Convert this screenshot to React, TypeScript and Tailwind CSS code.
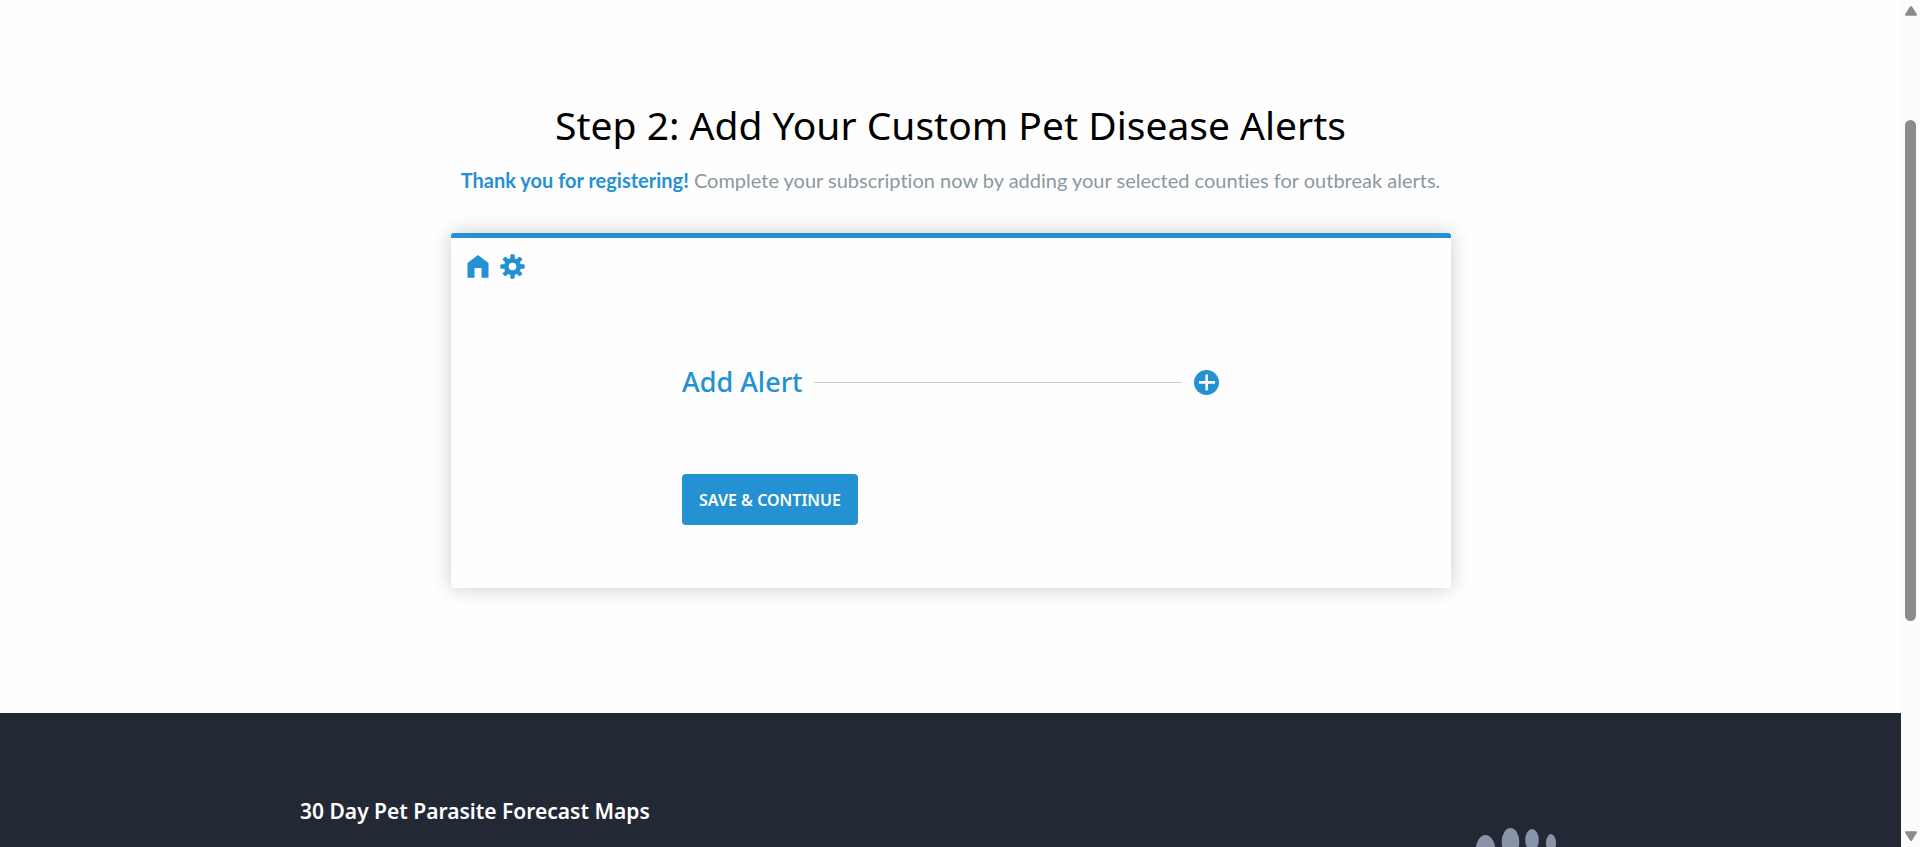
function HomeIcon() {
  return (
    <svg viewBox="0 0 22 23" className="h-[23px] w-[22px]" fill="currentColor" aria-hidden="true">
      <path d="M11 0 L21.5 8 V22.8 H14.5 V14 Q14.5 13 13.5 13 H8.5 Q7.5 13 7.5 14 V22.8 H0.5 V8 Z" />
    </svg>
  );
}

function GearIcon() {
  return (
    <svg viewBox="-12.5 -12.5 25 25" className="size-[25px]" fill="currentColor" aria-hidden="true">
      {[0, 45, 90, 135].map((angle) => (
        <rect key={angle} x="-2.2" y="-12.2" width="4.4" height="24.4" rx="1.2" transform={`rotate(${angle})`} />
      ))}
      <circle r="8.6" />
      <circle r="3.8" fill="white" />
    </svg>
  );
}

function PlusIcon() {
  return (
    <svg viewBox="0 0 25 25" className="size-[25px]" aria-hidden="true">
      <circle cx="12.5" cy="12.5" r="12.5" fill="currentColor" />
      <path d="M12.7 4.5 V20.2 M5 12.4 H21" stroke="white" strokeWidth="2.6" />
    </svg>
  );
}

function Paw() {
  return (
    <svg viewBox="0 0 84 90" className="h-[90px] w-[84px]" fill="#8a94a8" aria-hidden="true">
      <ellipse cx="10.5" cy="23" rx="10" ry="16" />
      <ellipse cx="35.5" cy="14" rx="8.8" ry="14" />
      <ellipse cx="57" cy="12" rx="6.8" ry="11" />
      <ellipse cx="76" cy="15" rx="5" ry="9" />
      <path d="M44 34 C62 30 72 56 66 72 C60 88 20 90 16 72 C12 56 28 38 44 34 Z" />
    </svg>
  );
}

function ScrollBar() {
  return (
    <div className="flex w-[19px] shrink-0 flex-col items-center bg-[#fcfcfc] py-1.5 text-[#8b8b8b]" aria-hidden="true">
      <svg viewBox="0 0 12 10" className="h-2.5 w-3" fill="currentColor">
        <path d="M5 0.6 Q6 -0.4 7 0.6 L11.7 8 Q12.3 9.8 11 9.8 H1 Q-0.3 9.8 0.3 8 Z" />
      </svg>
      <div className="grow-[104]" />
      <div className="w-[11px] grow-[501] rounded-full bg-[#8b8b8b]" />
      <div className="grow-[210]" />
      <svg viewBox="0 0 12 10" className="h-2.5 w-3" fill="currentColor">
        <path d="M5 9.4 Q6 10.4 7 9.4 L11.7 2 Q12.3 0.2 11 0.2 H1 Q-0.3 0.2 0.3 2 Z" />
      </svg>
    </div>
  );
}

export default function App() {
  return (
    <div className="flex h-screen bg-[#fefefe] font-['Lato',sans-serif]">
      <div className="flex min-w-0 flex-1 flex-col overflow-hidden">
        <main className="flex flex-col items-center px-6 pt-[100px] pb-[125px]">
          <h1 className="text-center font-['Noto_Sans',sans-serif] text-[39px] leading-[50px] text-black">
            Step 2: Add Your Custom Pet Disease Alerts
          </h1>
          <p className="mt-4 text-center text-xl leading-7 text-[#8a98a0] [font-variant-ligatures:none]">
            <strong className="font-bold text-[#2491d3]">Thank you for registering!</strong> Complete your subscription
            now by adding your selected counties for outbreak alerts.
          </p>
          <section className="mt-[39px] w-full max-w-[1000px] rounded-[3px] border-t-5 border-[#2491d3] bg-[#fefefe] px-4 pt-4 pb-[63px] text-[#2491d3] shadow-[0_0_20px_rgba(0,0,0,0.2)]">
            <nav className="flex items-center gap-[11px]">
              <a href="#home" aria-label="Home">
                <HomeIcon />
              </a>
              <a href="#settings" aria-label="Settings">
                <GearIcon />
              </a>
            </nav>
            <form className="mx-auto mt-[85px] w-full max-w-[537px]" onSubmit={(e) => e.preventDefault()}>
              <div className="flex items-center gap-3">
                <h2 className="font-['Noto_Sans',sans-serif] text-[27px] leading-9 font-medium">Add Alert</h2>
                <div className="h-px flex-1 bg-[#ccc]" />
                <button type="button" aria-label="Add alert">
                  <PlusIcon />
                </button>
              </div>
              <button
                type="submit"
                className="mt-[74px] h-[51px] rounded bg-[#2491d3] px-[17px] font-['Noto_Sans',sans-serif] text-base font-semibold text-white"
              >
                SAVE &amp; CONTINUE
              </button>
            </form>
          </section>
        </main>
        <footer className="flex-1 bg-[#222935] px-6">
          <div className="mx-auto flex max-w-[1301px] items-start justify-between">
            <h3 className="mt-[82px] font-['Noto_Sans',sans-serif] text-[21px] leading-8 font-semibold text-white">
              30 Day Pet Parasite Forecast Maps
            </h3>
            <div className="mt-[115px] mr-[42px]">
              <Paw />
            </div>
          </div>
        </footer>
      </div>
      <ScrollBar />
    </div>
  );
}
